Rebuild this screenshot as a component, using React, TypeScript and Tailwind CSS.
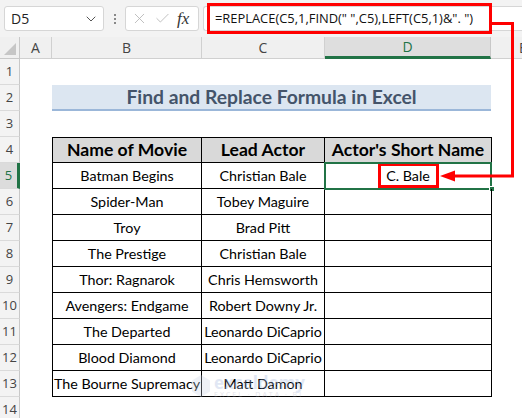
import { ChevronDown, X, Check } from 'lucide-react';

const movies = [
  ['Batman Begins', 'Christian Bale'],
  ['Spider-Man', 'Tobey Maguire'],
  ['Troy', 'Brad Pitt'],
  ['The Prestige', 'Christian Bale'],
  ['Thor: Ragnarok', 'Chris Hemsworth'],
  ['Avengers: Endgame', 'Robert Downy Jr.'],
  ['The Departed', 'Leonardo DiCaprio'],
  ['Blood Diamond', 'Leonardo DiCaprio'],
  ['The Bourne Supremacy', 'Matt Damon'],
];

const sheetFont = { fontFamily: 'Lato, "Open Sans", sans-serif' };
const uiFont = { fontFamily: '"Open Sans", "Noto Sans", sans-serif' };

function RowHead({ n, active }: { n: number; active?: boolean }) {
  return (
    <div
      className={
        'flex w-[20px] shrink-0 items-center justify-center border-b border-[#dadada] text-[13px] ' +
        (active
          ? 'border-r-[3px] border-r-[#217346] bg-[#dcdcdc] text-[#217346]'
          : 'border-r border-r-[#c8c8c8] bg-[#f3f3f3] text-[#444]')
      }
      style={uiFont}
    >
      {n}
    </div>
  );
}

export default function App() {
  return (
    <div className="relative h-[418px] w-[522px] overflow-hidden bg-white">
      {/* formula bar */}
      <div className="flex h-[37px] items-center bg-[#f3f3f3]" style={uiFont}>
        <div className="ml-[4px] flex h-[25px] w-[100px] shrink-0 items-center justify-between rounded-[3px] border border-[#d6d6d6] bg-white pl-[6px] pr-[4px] text-[14px] text-[#222]">
          <span>D5</span>
          <ChevronDown className="h-4 w-4 text-[#555]" strokeWidth={1.5} />
        </div>
        <div className="flex w-[21px] shrink-0 flex-col items-center gap-[2px]">
          <span className="h-[2px] w-[2px] bg-[#888]" />
          <span className="h-[2px] w-[2px] bg-[#888]" />
          <span className="h-[2px] w-[2px] bg-[#888]" />
        </div>
        <div className="flex h-[25px] w-[74px] shrink-0 items-center gap-[6px] rounded-[3px] border border-[#d6d6d6] bg-white pl-[5px]">
          <X className="h-[17px] w-[17px] text-[#b5b5b5]" strokeWidth={1.2} />
          <Check className="h-[17px] w-[17px] text-[#b5b5b5]" strokeWidth={1.2} />
          <span className="text-[17px] italic text-[#333]" style={{ fontFamily: '"Liberation Serif", serif' }}>
            fx
          </span>
        </div>
        <div className="ml-[4px] flex h-[25px] flex-1 items-center rounded-l-[3px] border border-r-0 border-[#d6d6d6] bg-white">
          <div className="ml-[3px] flex h-[31px] w-[285px] shrink-0 items-center whitespace-nowrap border-[3px] border-[#ff0000] pl-[5px] text-[12.9px] text-[#111]">
            =REPLACE(C5,1,FIND(" ",C5),LEFT(C5,1)&". ")
          </div>
        </div>
      </div>

      {/* column headers */}
      <div className="flex h-[22px] bg-[#f0f0f0] text-[14px] text-[#444]" style={uiFont}>
        <div className="relative w-[20px] shrink-0 border-b border-r border-[#c8c8c8]">
          <div className="absolute bottom-[3px] right-[3px] h-0 w-0 border-b-[12px] border-l-[12px] border-b-[#c6c6c6] border-l-transparent" />
        </div>
        <div className="flex w-[32px] shrink-0 items-center justify-center border-b border-r border-[#d0d0d0]">A</div>
        <div className="flex w-[150px] shrink-0 items-center justify-center border-b border-r border-[#d0d0d0]">B</div>
        <div className="flex w-[123px] shrink-0 items-center justify-center border-b border-r border-[#d0d0d0]">C</div>
        <div className="flex w-[166px] shrink-0 items-center justify-center border-b-[3px] border-r border-b-[#217346] border-r-[#c8c8c8] bg-[#dedede] text-[#217346]">
          D
        </div>
        <div className="flex w-[64px] shrink-0 items-center justify-center border-b border-[#d0d0d0] text-[#444]">E</div>
      </div>

      {/* sheet rows */}
      <div style={sheetFont} className="text-[14.3px] text-black">
        <div className="flex h-[26px]">
          <RowHead n={1} />
        </div>
        <div className="flex h-[26px]">
          <RowHead n={2} />
          <div className="w-[32px]" />
          <div className="flex w-[439px] items-center justify-center border-b-2 border-[#9bb7d9] bg-[#dce6f1] text-[19.3px] font-bold text-[#44546a]">
            Find and Replace Formula in Excel
          </div>
        </div>
        <div className="flex h-[26px]">
          <RowHead n={3} />
        </div>
        <div className="flex h-[26px]">
          <RowHead n={4} />
          <div className="w-[32px]" />
          <div className="flex w-[150px] items-center justify-center whitespace-nowrap border border-black bg-[#d9d9d9] text-[17.6px] font-bold">
            Name of Movie
          </div>
          <div className="flex w-[123px] items-center justify-center whitespace-nowrap border-y border-r border-black bg-[#d9d9d9] text-[17.6px] font-bold">
            Lead Actor
          </div>
          <div className="flex w-[167px] items-center justify-center whitespace-nowrap border-y border-r border-black bg-[#d9d9d9] text-[17.6px] font-bold">
            Actor's Short Name
          </div>
        </div>
        {movies.map(([movie, actor], i) => (
          <div key={movie} className="flex h-[26px]">
            <RowHead n={i + 5} active={i === 0} />
            <div className="w-[32px]" />
            <div className="flex w-[150px] items-center justify-center whitespace-nowrap border-x border-b border-black">
              {movie}
            </div>
            <div className="flex w-[123px] items-center justify-center whitespace-nowrap border-b border-r border-black">
              {actor}
            </div>
            <div className="relative flex w-[167px] items-center justify-center border-b border-r border-black">
              {i === 0 && (
                <>
                  <span className="flex h-[25px] w-[61px] items-center justify-center border-[3px] border-[#ff0000]">
                    C. Bale
                  </span>
                  <div className="absolute -left-px -top-px h-[28px] w-[168px] border-2 border-[#217346]" />
                  <div className="absolute -bottom-[4px] -right-[4px] h-[6px] w-[6px] border border-white bg-[#217346]" />
                </>
              )}
            </div>
          </div>
        ))}
        <div className="flex h-[26px]">
          <RowHead n={14} />
        </div>
      </div>

      {/* watermark */}
      <div className="pointer-events-none absolute left-[192px] top-[374px] flex items-center gap-[4px] opacity-30">
        <div className="h-[22px] w-[18px] bg-[#c9d3e6] [clip-path:polygon(50%_0,100%_25%,100%_75%,50%_100%,0_75%,0_25%)]" />
        <div className="flex flex-col leading-none" style={uiFont}>
          <span className="text-[17px] font-bold text-[#9db3dc]">exceldemy</span>
          <span className="text-[7px] tracking-[2px] text-[#aab]">EXCEL · DATA · BI</span>
        </div>
      </div>

      {/* red arrow */}
      <svg className="pointer-events-none absolute left-0 top-0" width="522" height="418">
        <polyline points="492,23.5 512.5,23.5 512.5,176 452,176" fill="none" stroke="#ff0000" strokeWidth="3" />
        <polygon points="440,176 455,170.5 455,181.5" fill="#ff0000" />
      </svg>
    </div>
  );
}
